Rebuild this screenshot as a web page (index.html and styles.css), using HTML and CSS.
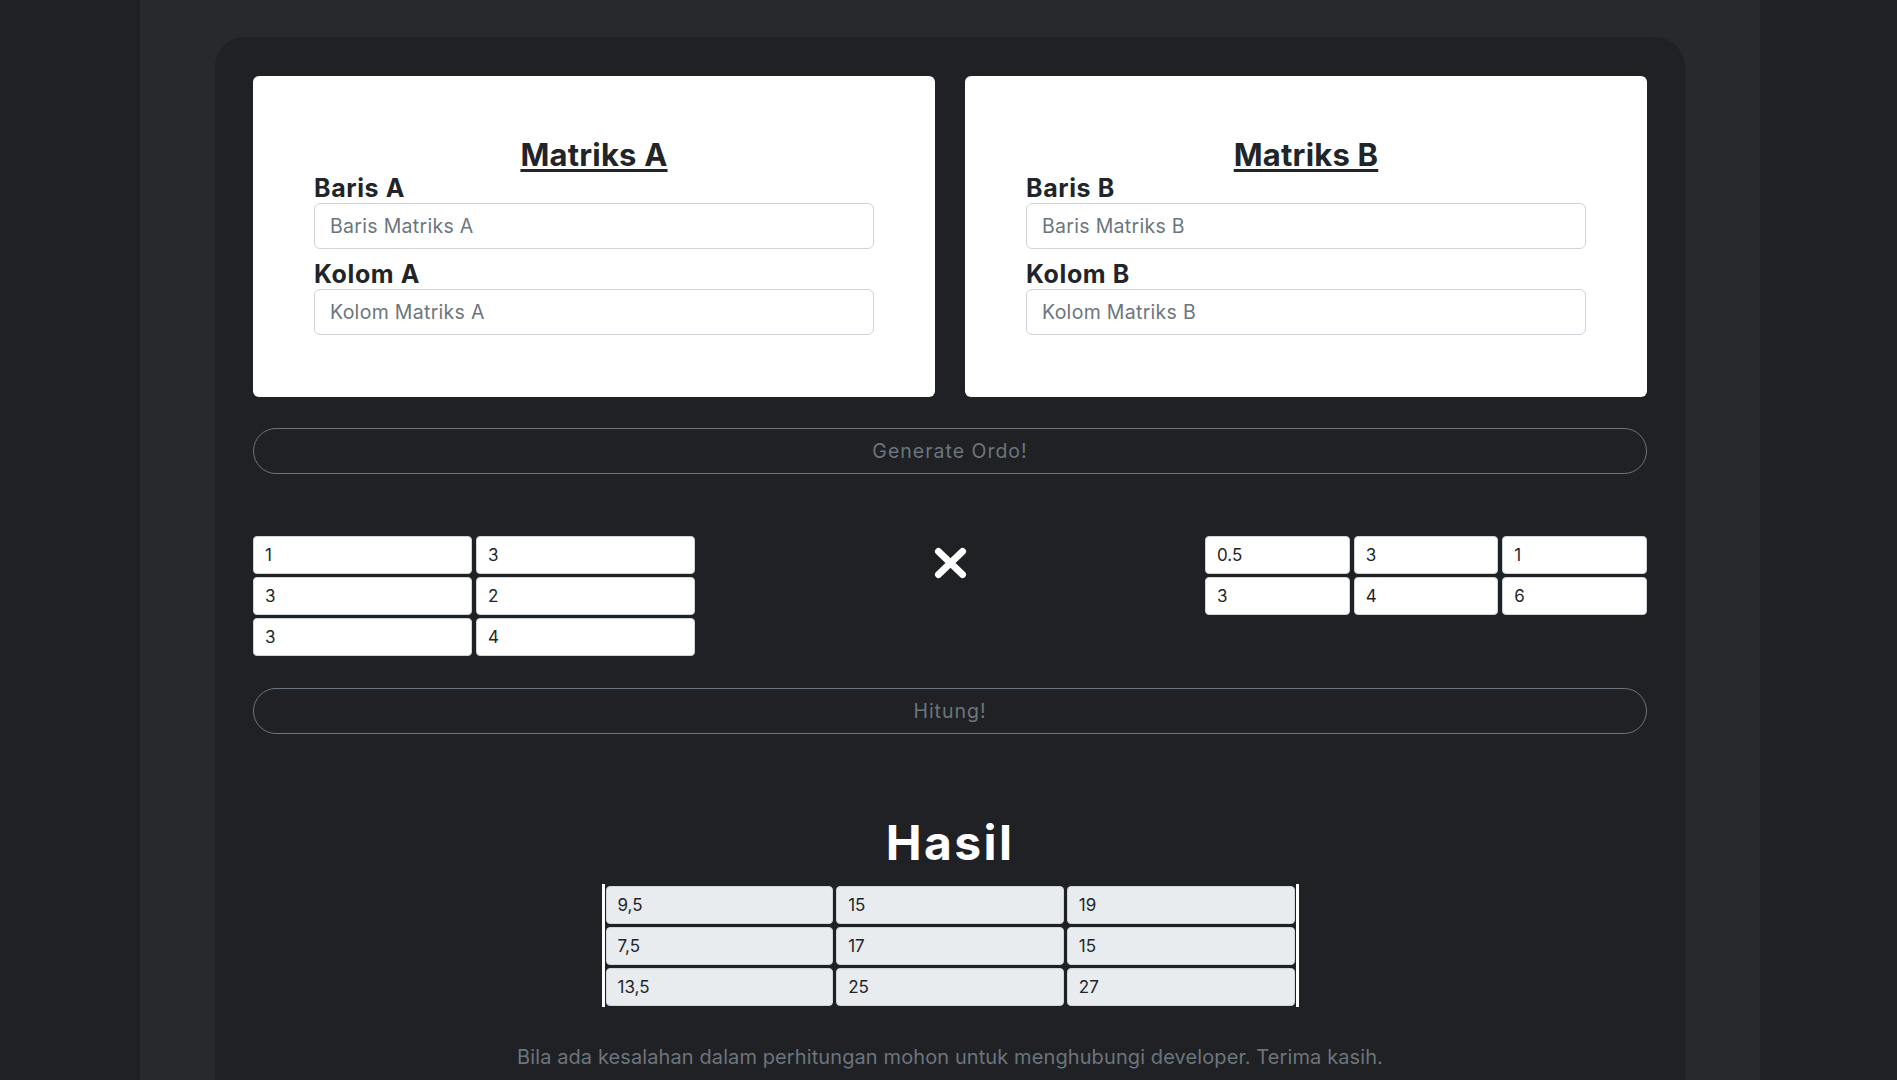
FILE: index.html
```html
<!DOCTYPE html>
<html lang="id">
<head>
<meta charset="utf-8">
<title>Perkalian Matriks</title>
<link rel="stylesheet" href="styles.css">
</head>
<body>
<div class="page">
  <main class="panel">
    <section class="cards">
      <div class="card">
        <h2 class="card-title">Matriks A</h2>
        <label class="field-label">Baris A</label>
        <div class="field"><span class="placeholder">Baris Matriks A</span></div>
        <label class="field-label second">Kolom A</label>
        <div class="field"><span class="placeholder">Kolom Matriks A</span></div>
      </div>
      <div class="card">
        <h2 class="card-title">Matriks B</h2>
        <label class="field-label">Baris B</label>
        <div class="field"><span class="placeholder">Baris Matriks B</span></div>
        <label class="field-label second">Kolom B</label>
        <div class="field"><span class="placeholder">Kolom Matriks B</span></div>
      </div>
    </section>

    <button class="pill-btn">Generate Ordo!</button>

    <section class="matrices">
      <div class="matrix cols-2">
        <div class="cell">1</div><div class="cell">3</div>
        <div class="cell">3</div><div class="cell">2</div>
        <div class="cell">3</div><div class="cell">4</div>
      </div>
      <div class="times">
        <svg width="33" height="32" viewBox="0 0 33 32" aria-hidden="true">
          <path d="M4.5 4.5 L28.5 27.5 M28.5 4.5 L4.5 27.5" stroke="#ffffff" stroke-width="7" stroke-linecap="round" fill="none"/>
        </svg>
      </div>
      <div class="matrix cols-3">
        <div class="cell">0.5</div><div class="cell">3</div><div class="cell">1</div>
        <div class="cell">3</div><div class="cell">4</div><div class="cell">6</div>
      </div>
    </section>

    <button class="pill-btn hitung">Hitung!</button>

    <section class="result">
      <h1 class="result-title">Hasil</h1>
      <div class="result-table">
        <div class="cell ro">9,5</div><div class="cell ro">15</div><div class="cell ro">19</div>
        <div class="cell ro">7,5</div><div class="cell ro">17</div><div class="cell ro">15</div>
        <div class="cell ro">13,5</div><div class="cell ro">25</div><div class="cell ro">27</div>
      </div>
      <p class="note">Bila ada kesalahan dalam perhitungan mohon untuk menghubungi developer. Terima kasih.</p>
    </section>
  </main>
</div>
</body>
</html>
```

FILE: styles.css
```css
* {
  box-sizing: border-box;
}

html, body {
  margin: 0;
  padding: 0;
}

body {
  background: #202124;
  padding-left: 3px;
  font-family: Inter, "Open Sans", sans-serif;
  color: #212529;
}

.page {
  width: 1620px;
  margin: 0 auto;
  min-height: 100vh;
  background: #28292c;
  padding-top: 37px;
}

.panel {
  width: 1470px;
  margin: 0 auto;
  background: #202124;
  border-radius: 30px 30px 0 0;
  padding: 39px 38px 40px;
}

.cards {
  display: grid;
  grid-template-columns: 1fr 1fr;
  gap: 30px;
}

.card {
  background: #ffffff;
  border-radius: 6px;
  padding: 60px 61px 62px;
  display: flex;
  flex-direction: column;
}

.card-title {
  margin: 0;
  text-align: center;
  font-size: 31px;
  line-height: 38px;
  font-weight: 700;
  letter-spacing: 0.2px;
  text-decoration: underline;
  text-decoration-thickness: 3px;
  text-underline-offset: 3px;
}

.field-label {
  display: block;
  font-size: 25px;
  line-height: 28px;
  font-weight: 700;
  letter-spacing: 0.6px;
  margin-bottom: 1px;
}

.field-label.second {
  margin-top: 11px;
}

.field {
  height: 46px;
  border: 1px solid #ced4da;
  border-radius: 6px;
  padding: 0 15px;
  display: flex;
  align-items: center;
  font-size: 19.5px;
}

.placeholder {
  color: #6c757d;
  letter-spacing: 0.3px;
}

.pill-btn {
  display: block;
  width: 100%;
  height: 46px;
  margin-top: 31px;
  background: transparent;
  border: 1px solid #6c757d;
  border-radius: 999px;
  color: #6c757d;
  font-family: Inter, "Open Sans", sans-serif;
  font-size: 19.5px;
  letter-spacing: 1px;
  padding: 0;
}

.matrices {
  margin-top: 62px;
  display: flex;
  justify-content: space-between;
  align-items: flex-start;
}

.matrix {
  display: grid;
  width: 442px;
  column-gap: 4px;
  row-gap: 3px;
}

.cols-2 {
  grid-template-columns: repeat(2, 1fr);
}

.cols-3 {
  grid-template-columns: repeat(3, 1fr);
}

.cell {
  height: 38px;
  background: #ffffff;
  border: 1px solid #ced4da;
  border-radius: 4px;
  padding: 0 11px;
  display: flex;
  align-items: center;
  font-size: 17px;
  color: #212529;
}

.cell.ro {
  background: #e9ecef;
}

.times {
  margin-top: 11px;
  width: 33px;
  height: 32px;
  display: flex;
}

.hitung {
  margin-top: 32px;
}

.result {
  display: flex;
  flex-direction: column;
  align-items: center;
}

.result-title {
  margin: 80px 0 0;
  font-size: 48px;
  line-height: 58px;
  font-weight: 700;
  letter-spacing: 2.4px;
  color: #ffffff;
}

.result-table {
  margin-top: 12px;
  width: 697px;
  display: grid;
  grid-template-columns: repeat(3, 1fr);
  column-gap: 3px;
  row-gap: 3px;
  border-left: 3px solid #ffffff;
  border-right: 3px solid #ffffff;
  padding: 2px 1px 1px;
}

.note {
  margin: 35px 0 0;
  font-size: 20px;
  line-height: 30px;
  color: #6c757d;
  letter-spacing: 0.1px;
}
```
